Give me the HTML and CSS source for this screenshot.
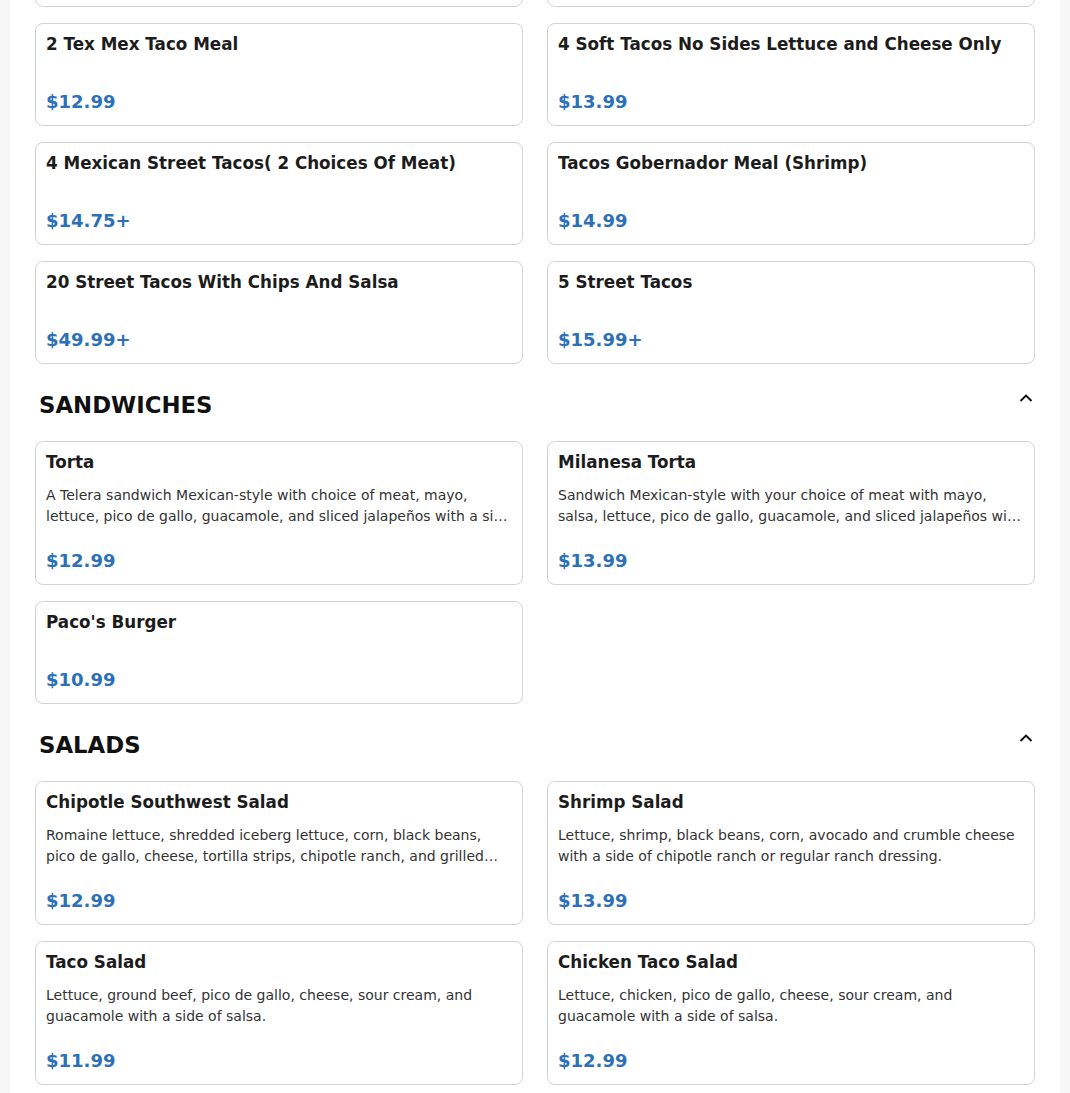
FILE: index.html
```html
<!DOCTYPE html>
<html lang="en">
<head>
<meta charset="utf-8">
<title>Menu</title>
<link rel="stylesheet" href="styles.css">
</head>
<body>
<main class="page">
  <section class="section section-cut">
    <div class="grid">
      <div class="card"><h3 class="title">3 Tacos</h3><div class="price">$10.99</div></div>
      <div class="card"><h3 class="title">3 Tacos Meal</h3><div class="price">$12.99</div></div>
      <div class="card"><h3 class="title">2 Tex Mex Taco Meal</h3><div class="price">$12.99</div></div>
      <div class="card"><h3 class="title">4 Soft Tacos No Sides Lettuce and Cheese Only</h3><div class="price">$13.99</div></div>
      <div class="card"><h3 class="title">4 Mexican Street Tacos( 2 Choices Of Meat)</h3><div class="price">$14.75+</div></div>
      <div class="card"><h3 class="title">Tacos Gobernador Meal (Shrimp)</h3><div class="price">$14.99</div></div>
      <div class="card"><h3 class="title">20 Street Tacos With Chips And Salsa</h3><div class="price">$49.99+</div></div>
      <div class="card"><h3 class="title">5 Street Tacos</h3><div class="price">$15.99+</div></div>
    </div>
  </section>

  <section class="section">
    <div class="section-head">
      <h2 class="section-title">SANDWICHES</h2>
      <svg class="chevron" width="14" height="8" viewBox="0 0 14 8"><path d="M1.5 7 L7 1.6 L12.5 7" fill="none" stroke="#111" stroke-width="2"/></svg>
    </div>
    <div class="grid">
      <div class="card"><h3 class="title">Torta</h3><p class="desc">A Telera sandwich Mexican-style with choice of meat, mayo, lettuce, pico de gallo, guacamole, and sliced jalapeños with a side of chips and salsa.</p><div class="price">$12.99</div></div>
      <div class="card"><h3 class="title">Milanesa Torta</h3><p class="desc">Sandwich Mexican-style with your choice of meat with mayo, salsa, lettuce, pico de gallo, guacamole, and sliced jalapeños with a side of chips.</p><div class="price">$13.99</div></div>
      <div class="card"><h3 class="title">Paco's Burger</h3><div class="price">$10.99</div></div>
    </div>
  </section>

  <section class="section">
    <div class="section-head">
      <h2 class="section-title">SALADS</h2>
      <svg class="chevron" width="14" height="8" viewBox="0 0 14 8"><path d="M1.5 7 L7 1.6 L12.5 7" fill="none" stroke="#111" stroke-width="2"/></svg>
    </div>
    <div class="grid">
      <div class="card"><h3 class="title">Chipotle Southwest Salad</h3><p class="desc">Romaine lettuce, shredded iceberg lettuce, corn, black beans, pico de gallo, cheese, tortilla strips, chipotle ranch, and grilled chicken.</p><div class="price">$12.99</div></div>
      <div class="card"><h3 class="title">Shrimp Salad</h3><p class="desc">Lettuce, shrimp, black beans, corn, avocado and crumble cheese with a side of chipotle ranch or regular ranch dressing.</p><div class="price">$13.99</div></div>
      <div class="card"><h3 class="title">Taco Salad</h3><p class="desc">Lettuce, ground beef, pico de gallo, cheese, sour cream, and guacamole with a side of salsa.</p><div class="price">$11.99</div></div>
      <div class="card"><h3 class="title">Chicken Taco Salad</h3><p class="desc">Lettuce, chicken, pico de gallo, cheese, sour cream, and guacamole with a side of salsa.</p><div class="price">$12.99</div></div>
    </div>
  </section>
</main>
</body>
</html>
```

FILE: styles.css
```css
* { box-sizing: border-box; }
html, body { margin: 0; padding: 0; }
body {
  background: #f7f7f7;
  font-family: "DejaVu Sans", Verdana, sans-serif;
  color: #1a1a1a;
  overflow: hidden;
}
.page {
  width: 1050px;
  margin: 0 auto;
  background: #fff;
  padding: 0 25px 40px;
  min-height: 1200px;
}
.section-cut { margin-top: -96px; }
.grid {
  display: grid;
  grid-template-columns: 1fr 1fr;
  column-gap: 24px;
  row-gap: 16px;
}
.card {
  border: 1px solid #d2d2d2;
  border-radius: 8px;
  padding: 10px;
  display: flex;
  flex-direction: column;
  background: #fff;
}
.title {
  margin: 0;
  font-size: 16.75px;
  font-weight: bold;
  line-height: 21px;
  color: #1c1c1c;
}
.desc {
  margin: 12px 0 0;
  font-size: 14px;
  line-height: 21px;
  color: #333;
  display: -webkit-box;
  -webkit-line-clamp: 2;
  -webkit-box-orient: vertical;
  overflow: hidden;
}
.price {
  margin-top: 35px;
  font-size: 18px;
  font-weight: bold;
  line-height: 24px;
  margin-bottom: 1px;
  color: #2b70b9;
}
.desc + .price { margin-top: 22px; }
.section-head {
  display: flex;
  justify-content: space-between;
  align-items: flex-start;
  padding: 27px 2px 22px 4px;
}
.section-title {
  margin: 0;
  font-size: 22.8px;
  font-weight: bold;
  line-height: 28px;
  color: #111;
}
.chevron { margin-top: 3px; }
```
